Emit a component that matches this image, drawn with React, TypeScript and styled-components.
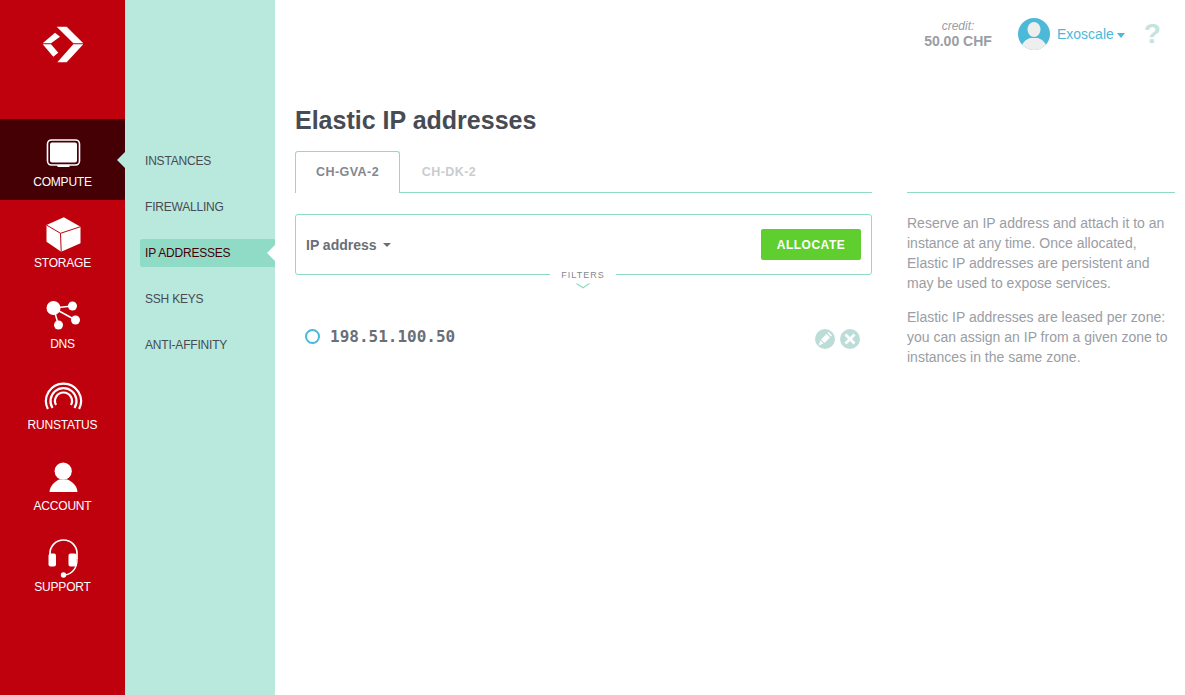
import React from "react";
import styled, { createGlobalStyle } from "styled-components";

const GlobalStyle = createGlobalStyle`
  html, body {
    margin: 0;
    padding: 0;
    background: #fff;
    font-family: "Liberation Sans", Arial, sans-serif;
  }
`;

const ComputeIcon = () => (
  <svg width="40" height="40" viewBox="0 0 40 40">
    <rect x="4.5" y="6" width="32" height="25" rx="4" fill="none" stroke="#fff" strokeWidth="1.6" />
    <rect x="7" y="8.5" width="27" height="20" rx="2" fill="#fff" />
    <rect x="14.5" y="31" width="12" height="2" fill="#fff" />
  </svg>
);

const StorageIcon = () => (
  <svg width="40" height="40" viewBox="0 0 40 40">
    <path d="M20.8 2.3 37.5 11.7V28.3L18.2 36.7 3.5 26.7V10Z" fill="#fff" />
    <path d="M3.5 10 17.5 18.3 37.5 11.7M17.5 18.3 18.2 36.7" fill="none" stroke="#bf000d" strokeWidth="1" />
  </svg>
);

const DnsIcon = () => (
  <svg width="40" height="40" viewBox="0 0 40 40">
    <path d="M10.5 12 29.5 10M10.5 12 32.5 24M10.5 12 15.5 29" stroke="#fff" strokeWidth="1.6" fill="none" />
    <circle cx="10.5" cy="12" r="7" fill="#fff" />
    <circle cx="29.5" cy="10" r="4.5" fill="#fff" />
    <circle cx="32.5" cy="24" r="4.5" fill="#fff" />
    <circle cx="15.5" cy="29" r="4.5" fill="#fff" />
  </svg>
);

const RunstatusIcon = () => (
  <svg width="40" height="40" viewBox="0 0 40 40" fill="none" stroke="#fff" strokeWidth="2.2">
    <path d="M4.9 32A17.5 17.5 0 1 1 36.1 32" />
    <path d="M9.5 31A13 13 0 1 1 31.5 31" />
    <path d="M13 28A8.5 8.5 0 1 1 28 28" />
  </svg>
);

const AccountIcon = () => (
  <svg width="40" height="40" viewBox="0 0 40 40">
    <circle cx="20.2" cy="13.2" r="8.6" fill="#fff" />
    <path d="M6.5 34C7 28 11 24 16 21.5H24.5C30 24 34 28 34.5 34Z" fill="#fff" />
  </svg>
);

const SupportIcon = () => (
  <svg width="40" height="40" viewBox="0 0 40 40">
    <path d="M7 18V14.5A13.5 13.5 0 0 1 34 14.5V20" fill="none" stroke="#fff" strokeWidth="1.7" />
    <rect x="5.5" y="14.5" width="7.5" height="13" rx="2" fill="#fff" />
    <rect x="25.5" y="14.5" width="8" height="13" rx="2" fill="#fff" />
    <path d="M34 20C34.5 29 29 35 22 36" fill="none" stroke="#fff" strokeWidth="1.4" />
    <circle cx="20.5" cy="36" r="2.7" fill="#fff" />
  </svg>
);

const railItems = [
  { label: "Compute", icon: <ComputeIcon />, active: true },
  { label: "Storage", icon: <StorageIcon /> },
  { label: "DNS", icon: <DnsIcon /> },
  { label: "Runstatus", icon: <RunstatusIcon /> },
  { label: "Account", icon: <AccountIcon /> },
  { label: "Support", icon: <SupportIcon /> },
];

const subItems = ["Instances", "Firewalling", "IP addresses", "SSH keys", "Anti-affinity"];

const App: React.FC = () => {
  return (
    <Page>
      <GlobalStyle />
      <Rail>
        <LogoBox>
          <svg width="42" height="37" viewBox="42 26 42 37">
            <path
              fill="#fff"
              d="M56.7 26.7H66.7L83.3 43.3H73.3ZM57.3 62.3H66.7L83.3 44.3H73.3ZM42.7 43.3 55 32.7 60 36.7 51 43.3ZM42.7 44.3H51L58.3 52.7 53.3 56.7Z"
            />
          </svg>
        </LogoBox>
        {railItems.map((item) => (
          <RailItem key={item.label} $active={item.active}>
            {item.icon}
            <RailLabel>{item.label}</RailLabel>
          </RailItem>
        ))}
      </Rail>

      <SubNav>
        {subItems.map((item) => (
          <SubItem key={item} $active={item === "IP addresses"}>
            {item}
          </SubItem>
        ))}
      </SubNav>

      <Main>
        <TopBar>
          <Credit>
            <CreditLabel>credit:</CreditLabel>
            <CreditValue>50.00 CHF</CreditValue>
          </Credit>
          <Avatar>
            <svg width="32" height="32" viewBox="0 0 32 32">
              <circle cx="16" cy="16" r="16" fill="#4cb9d8" />
              <clipPath id="avatar-clip">
                <circle cx="16" cy="16" r="16" />
              </clipPath>
              <g clipPath="url(#avatar-clip)" fill="#eeeeee">
                <ellipse cx="16" cy="11.5" rx="6.5" ry="7.5" />
                <path d="M3 32C3 25 8 21.5 12 20H20C24 21.5 29 25 29 32Z" />
              </g>
            </svg>
          </Avatar>
          <UserName>Exoscale</UserName>
          <UserCaret />
          <HelpMark>?</HelpMark>
        </TopBar>

        <Title>Elastic IP addresses</Title>

        <Columns>
          <div>
            <Tabs>
              <Tab $active>CH-GVA-2</Tab>
              <Tab>CH-DK-2</Tab>
            </Tabs>

            <FilterBox>
              <AddressSelect>
                IP address
                <SelectCaret />
              </AddressSelect>
              <AllocateButton>ALLOCATE</AllocateButton>
              <FiltersToggle>
                <FiltersLabel>FILTERS</FiltersLabel>
                <svg width="14" height="6" viewBox="0 0 14 6">
                  <path d="M0.5 0.5 7 4.8 13.5 0.5" fill="none" stroke="#90dbc5" strokeWidth="1.2" />
                </svg>
              </FiltersToggle>
            </FilterBox>

            <IpRow>
              <StatusRing />
              <IpText>198.51.100.50</IpText>
              <RowActions>
                <svg width="20" height="20" viewBox="0 0 20 20">
                  <circle cx="10" cy="10" r="10" fill="#bcdcd8" />
                  <path d="M11.5 5 15 8.5 9.5 14 6 10.5Z" fill="#fff" />
                  <path d="M12.5 4 13.5 3 17 6.5 16 7.5Z" fill="#fff" />
                  <path d="M5.5 11.5 8.5 14.5 3.5 16.5Z" fill="#fff" />
                </svg>
                <svg width="20" height="20" viewBox="0 0 20 20">
                  <circle cx="10" cy="10" r="10" fill="#bcdcd8" />
                  <path d="M5.5 5.5 14.5 14.5M14.5 5.5 5.5 14.5" stroke="#fff" strokeWidth="2.8" fill="none" />
                </svg>
              </RowActions>
            </IpRow>
          </div>

          <Aside>
            <AsideText>
              Reserve an IP address and attach it to an instance at any time. Once allocated,
              Elastic IP addresses are persistent and may be used to expose services.
            </AsideText>
            <AsideText>
              Elastic IP addresses are leased per zone: you can assign an IP from a given zone to
              instances in the same zone.
            </AsideText>
          </Aside>
        </Columns>
      </Main>
    </Page>
  );
};

export default App;

const Page = styled.div`
  display: grid;
  grid-template-columns: 125px 150px 1fr;
  height: 695px;
  overflow: hidden;
`;

const Rail = styled.nav`
  background-color: #bf000d;
`;

const LogoBox = styled.div`
  display: flex;
  justify-content: center;
  height: 119px;
  padding-top: 26px;
  box-sizing: border-box;
`;

const RailItem = styled.div<{ $active?: boolean }>`
  position: relative;
  display: flex;
  flex-direction: column;
  align-items: center;
  height: 81px;
  padding-top: 15px;
  box-sizing: border-box;
  background-color: ${(p) => (p.$active ? "#450006" : "transparent")};

  ${(p) =>
    p.$active &&
    `
    &::after {
      content: "";
      position: absolute;
      right: 0;
      top: 33px;
      border-top: 8px solid transparent;
      border-bottom: 8px solid transparent;
      border-right: 8px solid #b9e8dc;
    }
  `}
`;

const RailLabel = styled.span`
  margin-top: 1px;
  font-size: 12px;
  letter-spacing: -0.2px;
  line-height: 14px;
  color: #fff;
  text-transform: uppercase;
`;

const SubNav = styled.div`
  display: flex;
  flex-direction: column;
  gap: 18px;
  padding: 147px 0 0 15px;
  background-color: #b9e8dc;
`;

const SubItem = styled.div<{ $active?: boolean }>`
  position: relative;
  height: 28px;
  padding-left: 5px;
  font-size: 12px;
  letter-spacing: -0.2px;
  line-height: 28px;
  text-transform: uppercase;
  color: ${(p) => (p.$active ? "#450006" : "#464b54")};
  background-color: ${(p) => (p.$active ? "#90dbc5" : "transparent")};
  border-radius: 2px 0 0 2px;

  ${(p) =>
    p.$active &&
    `
    &::after {
      content: "";
      position: absolute;
      right: 0;
      top: 6px;
      border-top: 8px solid transparent;
      border-bottom: 8px solid transparent;
      border-right: 8px solid #fff;
    }
  `}
`;

const Main = styled.main`
  padding: 0 10px 0 20px;
`;

const TopBar = styled.header`
  display: flex;
  align-items: center;
  height: 68px;
`;

const Credit = styled.div`
  display: flex;
  flex-direction: column;
  align-items: center;
  width: 70px;
  margin-left: 628px;
  color: #9a9da4;
`;

const CreditLabel = styled.span`
  font-size: 12px;
  line-height: 14px;
  font-style: italic;
`;

const CreditValue = styled.span`
  font-size: 14px;
  line-height: 16px;
  font-weight: 700;
`;

const Avatar = styled.div`
  display: flex;
  margin-left: 25px;
`;

const UserName = styled.span`
  margin-left: 7px;
  font-size: 14px;
  color: #4cb9d8;
`;

const UserCaret = styled.span`
  margin: 2px 0 0 3px;
  border-left: 4.5px solid transparent;
  border-right: 4.5px solid transparent;
  border-top: 5px solid #4cb9d8;
`;

const HelpMark = styled.span`
  margin-left: 19px;
  font-size: 28px;
  font-weight: 700;
  color: #c3e3dc;
`;

const Title = styled.h1`
  margin: 0;
  height: 83px;
  padding-top: 37px;
  box-sizing: border-box;
  font-size: 25px;
  line-height: 30px;
  font-weight: 700;
  color: #464b54;
`;

const Columns = styled.div`
  display: grid;
  grid-template-columns: 577px 268px;
  column-gap: 35px;
`;

const Tabs = styled.div`
  display: flex;
  height: 41px;
  border-bottom: 1px solid #90dbc5;
`;

const Tab = styled.div<{ $active?: boolean }>`
  width: ${(p) => (p.$active ? "105px" : "98px")};
  height: 42px;
  box-sizing: border-box;
  text-align: center;
  font-size: 12.5px;
  line-height: 40px;
  font-weight: 700;
  letter-spacing: 0.45px;
  color: ${(p) => (p.$active ? "#83878f" : "#c9ccd0")};
  background-color: ${(p) => (p.$active ? "#fff" : "transparent")};
  border: 1px solid ${(p) => (p.$active ? "#90dbc5" : "transparent")};
  border-bottom: none;
  border-radius: 3px 3px 0 0;
`;

const FilterBox = styled.div`
  position: relative;
  display: flex;
  justify-content: space-between;
  align-items: center;
  height: 61px;
  margin-top: 21px;
  padding: 0 10px;
  box-sizing: border-box;
  border: 1px solid #90dbc5;
  border-radius: 3px;
`;

const AddressSelect = styled.div`
  display: flex;
  align-items: center;
  font-size: 14px;
  font-weight: 700;
  color: #6a6e77;
`;

const SelectCaret = styled.span`
  margin: 1px 0 0 6px;
  border-left: 4px solid transparent;
  border-right: 4px solid transparent;
  border-top: 4px solid #6a6e77;
`;

const AllocateButton = styled.button`
  width: 100px;
  height: 31px;
  padding: 0;
  border: none;
  border-radius: 2px;
  background-color: #5fce2f;
  color: #fff;
  font-family: inherit;
  font-size: 12px;
  font-weight: 700;
  letter-spacing: 0.5px;
`;

const FiltersToggle = styled.div`
  position: absolute;
  left: 254px;
  bottom: -15px;
  display: flex;
  flex-direction: column;
  align-items: center;
  gap: 1px;
  width: 66px;
  background-color: #fff;
`;

const FiltersLabel = styled.span`
  font-size: 9px;
  line-height: 14px;
  letter-spacing: 1px;
  color: #83878f;
`;

const IpRow = styled.div`
  display: flex;
  align-items: center;
  height: 20px;
  margin-top: 51px;
  padding: 0 12px 0 10px;
`;

const StatusRing = styled.span`
  width: 15px;
  height: 15px;
  box-sizing: border-box;
  border: 2px solid #47b9d8;
  border-radius: 50%;
`;

const IpText = styled.span`
  margin-left: 10px;
  font-family: "DejaVu Sans Mono", monospace;
  font-size: 16px;
  font-weight: 700;
  color: #6a6e77;
`;

const RowActions = styled.div`
  display: flex;
  gap: 5px;
  margin: 5px 0 0 auto;
`;

const Aside = styled.aside`
  margin-top: 41px;
  padding-top: 20px;
  border-top: 1px solid #90dbc5;
`;

const AsideText = styled.p`
  margin: 0 0 14px;
  font-size: 14px;
  line-height: 20px;
  color: #9a9da4;
`;
